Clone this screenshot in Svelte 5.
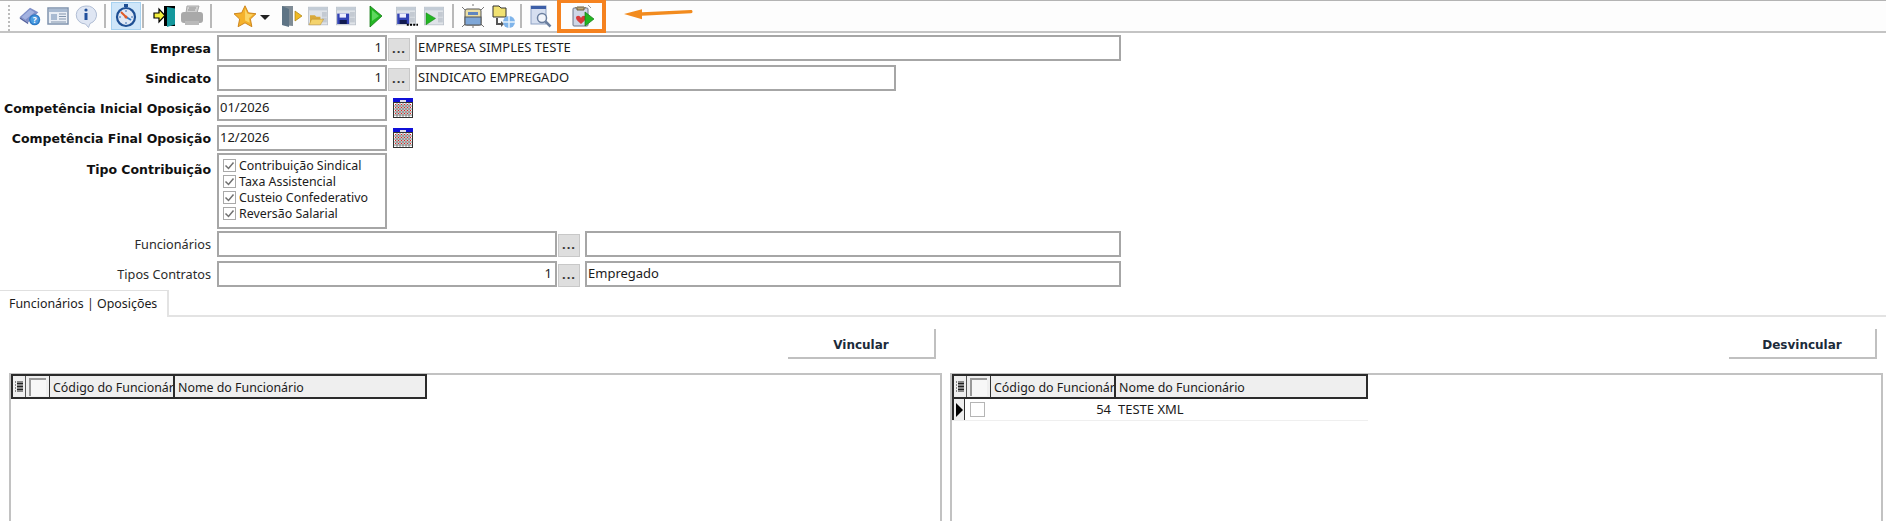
<script>
  const rowsTop = [
    { label: 'Empresa', code: '1', name: 'EMPRESA SIMPLES TESTE', wide: true },
    { label: 'Sindicato', code: '1', name: 'SINDICATO EMPREGADO', wide: false }
  ];
  const dates = [
    { label: 'Competência Inicial Oposição', value: '01/2026' },
    { label: 'Competência Final Oposição', value: '12/2026' }
  ];
  const tipos = ['Contribuição Sindical', 'Taxa Assistencial', 'Custeio Confederativo', 'Reversão Salarial'];
  const lower = [
    { label: 'Funcionários', code: '', name: '' },
    { label: 'Tipos Contratos', code: '1', name: 'Empregado' }
  ];
</script>

{#snippet cal()}
  <svg class="cal" viewBox="0 0 20 20" aria-hidden="true">
    <rect x="0" y="0" width="20" height="20" fill="#333"/>
    <rect x="0" y="0" width="20" height="4" fill="#1010d8"/>
    <rect x="7" y="2" width="6" height="2" fill="#dde"/>
    <rect x="1" y="5" width="18" height="14" fill="#fff"/>
    <path d="M1 8h18M1 11h18M1 14h18M1 17h18M4 5v14M7 5v14M10 5v14M13 5v14M16 5v14" stroke="#666" stroke-width=".8"/>
    <path d="M2 6.500h16M2 9.500h16M2 12.500h16M2 15.500h16" stroke="#e02020" stroke-width="1" stroke-dasharray="1 2"/>
  </svg>
{/snippet}

{#snippet panelBase()}
  <rect x="2" y="2" width="24" height="22" fill="#dfe3e8" stroke="#b8bfc8"/>
  <rect x="2" y="2" width="24" height="4" fill="#c3ccd6"/>
  <rect x="19" y="8" width="6" height="6" fill="#c4cad2"/>
  <rect x="19" y="15" width="6" height="6" fill="#c4cad2"/>
{/snippet}

{#snippet gridHead()}
  <div class="ghead">
    <div class="gind">
      <svg viewBox="0 0 10 14" width="10" height="14" aria-hidden="true"><path d="M1 2h1M1 5h1M1 8h1M1 11h1M3 2h6M3 5h6M3 8h6M3 11h6M3 3.500h6M3 6.500h6M3 9.500h6" stroke="#222" stroke-width="1"/></svg>
    </div>
    <div class="gchk"><span class="bigbox"></span></div>
    <div class="gcode">Código do Funcionário</div>
    <div class="gname">Nome do Funcionário</div>
  </div>
{/snippet}

<div class="page">
  <header class="toolbar">
    <span class="grip"></span>

    <span class="ico"><svg viewBox="-1 -1 30 28"><path d="M3 14 14 4l9 5-11 11z" fill="#7f8fc8"/><path d="M3 14l9 6 0 2-9-6z" fill="#56649f"/><path d="M5 14 14 6l5 3-10 8z" fill="#a3b2e0"/><circle cx="19" cy="17" r="6" fill="#2b78c4"/><circle cx="19" cy="17" r="4.500" fill="#4b9be0"/><text x="19" y="20.500" class="q">?</text></svg></span>
    <span class="ico"><svg viewBox="0 0 28 26"><rect x="4" y="5" width="20" height="16" fill="#e9eef5" stroke="#7f93ad" stroke-width="1.500"/><rect x="5" y="6" width="18" height="3" fill="#a9bbd2"/><rect x="7" y="11" width="6" height="6" fill="#a9bbd2"/><path d="M15 11h7M15 13.500h7M15 16h7M7 19h15" stroke="#8295ad"/></svg></span>
    <span class="ico"><svg viewBox="0 0 28 26"><path d="M14 3a9.500 9 0 0 1 4 17.500l-1.500 4-3-3.500A9.500 9 0 0 1 14 3z" fill="#dfe6f3" stroke="#b0bdd4"/><circle cx="14" cy="7" r="1.600" fill="#1f4f9c"/><path d="M14 10v7" stroke="#1f4f9c" stroke-width="3"/></svg></span>
    <span class="sep s1"></span>
    <span class="ico active"><svg viewBox="0 0 28 26"><rect x="12" y="1" width="4" height="3" fill="#1e4f94"/><circle cx="14" cy="14" r="9" fill="#dfe8f5" stroke="#1e4f94" stroke-width="2.200"/><path d="M14 14 9 9" stroke="#e05a28" stroke-width="2"/><path d="M14 14l5 3" stroke="#2f7ac8" stroke-width="2"/><circle cx="14" cy="14" r="1.500" fill="#e05a28"/><path d="M7 14h2M19 14h2M14 7v2M14 19v2" stroke="#3a6fb0"/></svg></span>
    <span class="sep s2"></span>
    <span class="ico"><svg viewBox="0 0 28 26"><path d="M14 3h11v20H14z" fill="#000"/><path d="M17 4l8 1.500v16L17 24z" fill="#14979c"/><path d="M4 10h5V6l6 6.500-6 6.500v-4H4z" fill="#f3ef3c" stroke="#000" stroke-width="1.200"/></svg></span>
    <span class="ico"><svg viewBox="0 0 28 26"><path d="M9 3h12l-2 7H8z" fill="#d0d0d0" stroke="#a8a8a8"/><rect x="3" y="9" width="22" height="11" rx="3" fill="#a9a9a9"/><rect x="7" y="18" width="14" height="4" fill="#b9b9b9"/><path d="M11 5h7M10 7h7" stroke="#909090"/></svg></span>
    <span class="sep s3"></span>
    <span class="ico"><svg viewBox="-1 -1 30 28"><path d="M14 2l3.600 7.600 8.200 1-6 5.700 1.600 8.200L14 20.400 6.600 24.500l1.600-8.200-6-5.700 8.200-1z" fill="#f5b22c" stroke="#c98016"/><path d="M14 5l2.600 5.600 6 .8-4.500 4 1 5-5-2.600z" fill="#fbd566"/></svg></span>
    <span class="caret"></span>
    <span class="ico"><svg viewBox="0 0 28 26"><path d="M6 3h11v20l-11-1z" fill="#7f8c96"/><path d="M6 3l7 3v18l-7-2z" fill="#5e7485"/><path d="M19 8l7 5-7 5z" fill="#f0b923" stroke="#a87f12" stroke-width=".7"/></svg></span>
    <span class="ico"><svg viewBox="-3.500 -3.250 35 32.500">{@render panelBase()}<path d="M4 12h6l2 2h5v9H4z" fill="#d9a93a"/><path d="M6 17h15l-4 7H3z" fill="#f4d36c" stroke="#b88a26" stroke-width=".6"/></svg></span>
    <span class="ico"><svg viewBox="-3.500 -3.250 35 32.500">{@render panelBase()}<rect x="3" y="10" width="15" height="13" fill="#3343b5"/><rect x="6" y="10" width="8" height="5" fill="#eef"/><rect x="6" y="18" width="9" height="5" fill="#101a50"/></svg></span>
    <span class="ico spaced"><svg viewBox="0 0 28 26"><path d="M8 3l12 10-12 11z" fill="#23b623" stroke="#157a15" stroke-width=".8"/><path d="M10 7l7 6-7 5z" fill="#5fd85f"/></svg></span>
    <span class="ico spaced"><svg viewBox="-3.500 -3.250 35 32.500">{@render panelBase()}<rect x="3" y="10" width="15" height="13" fill="#3343b5"/><rect x="6" y="10" width="8" height="5" fill="#eef"/><rect x="6" y="18" width="9" height="5" fill="#101a50"/><path d="M15 24h14" stroke="#000" stroke-width="2.500" stroke-dasharray="2.500 1.500"/></svg></span>
    <span class="ico"><svg viewBox="-3.500 -3.250 35 32.500">{@render panelBase()}<path d="M4 9l12 7-12 8z" fill="#23b623" stroke="#157a15" stroke-width=".6"/></svg></span>
    <span class="sep s4"></span>
    <span class="ico"><svg viewBox="0 0 28 26"><path d="M3 4l3 3M25 4l-3 3M3 24l3-3M25 24l-3-3M14 1v2M14 23v2" stroke="#777"/><rect x="6" y="6" width="16" height="16" rx="2" fill="#eadfa6" stroke="#555"/><rect x="6" y="14" width="16" height="8" fill="#7ea7d8" stroke="#555"/><rect x="9" y="9" width="10" height="3" fill="#5f86c0"/></svg></span>
    <span class="ico spaced"><svg viewBox="0 0 28 26"><path d="M4 3h6l2 2h5v9H4z" fill="#f1e171" stroke="#333"/><path d="M8 15v6h6" fill="none" stroke="#555" stroke-width="2"/><path d="M12 18l3 3-3 3z" fill="#555"/><circle cx="20" cy="19" r="6" fill="#7fb4ea"/><path d="M20 13v12M14 19h12" stroke="#e8f2fc" stroke-width="1.500"/></svg></span>
    <span class="sep s5"></span>
    <span class="ico"><svg viewBox="0 0 28 26"><rect x="5" y="3" width="15" height="18" fill="#d6dff0" stroke="#8ea2c4"/><rect x="5" y="3" width="15" height="3" fill="#3d5fa8"/><circle cx="16" cy="15" r="4.500" fill="#f2f5fb" stroke="#6b7f9f" stroke-width="1.500"/><path d="M19.500 18.500l5 5" stroke="#6b7f9f" stroke-width="2.500"/></svg></span>
    <span class="ico boxed"><svg viewBox="0 0 28 26"><rect x="5" y="5" width="15" height="18" rx="1" fill="#cfd6e6" stroke="#6b7488"/><path d="M9 4h7v3H9z" fill="#b9a87d" stroke="#6b5c3c"/><path d="M7 4h11v1H7z" fill="#8c8368"/><path d="M20 2l3 3" stroke="#999"/><path d="M8 15c0-3 4-3 5 0 1-3 5-3 5 0 0 2-3 4-5 6-2-2-5-4-5-6z" fill="#d83a3a"/><path d="M17 9l9 7-9 7z" fill="#23b623" stroke="#157a15" stroke-width=".7"/></svg></span>
  </header>

  <svg class="arrow" viewBox="0 0 69 12" aria-hidden="true"><path d="M0 6 18 1.300v3L67 2c1 0 1.500 .6 1.500 1.600S68 5.200 67 5.300L18 7.700v3.600z" fill="#f28b1e"/></svg>

  <section class="form">
    {#each rowsTop as r}
      <div class="row">
        <span class="label bold">{r.label}</span>
        <div class="input code">{r.code}</div>
        <button class="dots">...</button>
        <div class="input name" class:short={!r.wide}>{r.name}</div>
      </div>
    {/each}

    {#each dates as d}
      <div class="row">
        <span class="label bold">{d.label}</span>
        <div class="input date">{d.value}</div>
        {@render cal()}
      </div>
    {/each}

    <div class="row chkrow">
      <span class="label bold">Tipo Contribuição</span>
      <div class="checks">
        {#each tipos as t}
          <div class="chk">
            <svg viewBox="0 0 13 13" width="13" height="13" aria-hidden="true"><rect x=".5" y=".5" width="12" height="12" fill="#fff" stroke="#a9a9a9"/><path d="M2.500 6.500l3 3 5-6" fill="none" stroke="#707070" stroke-width="1.500"/></svg>
            <span>{t}</span>
          </div>
        {/each}
      </div>
    </div>

    {#each lower as l}
      <div class="row">
        <span class="label plain">{l.label}</span>
        <div class="input code long">{l.code}</div>
        <button class="dots">...</button>
        <div class="input name lname">{l.name}</div>
      </div>
    {/each}
  </section>

  <nav class="tabs"><div class="tab">Funcionários | Oposições</div></nav>

  <section class="work">
    <div class="pane">
      <div class="actions"><button class="action">Vincular</button></div>
      <div class="grid">{@render gridHead()}</div>
    </div>
    <div class="pane">
      <div class="actions"><button class="action">Desvincular</button></div>
      <div class="grid">
        {@render gridHead()}
        <div class="grow">
          <div class="gind arrowcell"><span class="tri"></span></div>
          <div class="gchk"><span class="smallbox"></span></div>
          <div class="gcode num">54</div>
          <div class="gname">TESTE XML</div>
        </div>
      </div>
    </div>
  </section>
</div>

<style>
  :global(body) { margin: 0; background: #fff; overflow: hidden; }
  .page {
    position: relative;
    width: 1886px;
    height: 521px;
    overflow: hidden;
    font-family: "Noto Sans", "DejaVu Sans", sans-serif;
    font-size: 12.4px;
    color: #1b1b1b;
    background: #fff;
  }

  .toolbar {
    display: flex;
    align-items: center;
    height: 30px;
    padding-left: 16px;
    border-top: 1px solid #b4b4b4;
    border-bottom: 2px solid #c4c4c4;
    position: relative;
    background: #fdfdfd;
  }
  .grip {
    position: absolute;
    left: 8px;
    top: 4px;
    width: 2px;
    height: 26px;
    background: repeating-linear-gradient(#bbb 0 2px, transparent 2px 4px);
  }
  .ico {
    display: flex;
    width: 28px;
    height: 26px;
    flex: none;
  }
  .ico.spaced { margin-left: 2px; }
  .ico svg { width: 28px; height: 26px; }
  .ico.active {
    background: #cfe6f9;
    outline: 1px solid #a8d2f0;
  }
  .ico.boxed {
    box-sizing: border-box;
    width: 49px;
    height: 34px;
    margin-left: 3px;
    align-items: center;
    justify-content: center;
    border: 4px solid #f5821f;
  }
  .sep { width: 2px; height: 24px; background: #b9b9b9; flex: none; }
  .s1 { margin: 0 6px 0 4px; }
  .s2 { margin: 0 6px 0 2px; }
  .s3 { margin: 0 19px 0 4px; }
  .s4 { margin: 0 5px 0 4px; }
  .s5 { margin: 0 4px 0 3px; }
  .caret {
    width: 0;
    height: 0;
    margin: 2px 6px 0 1px;
    border-left: 5px solid transparent;
    border-right: 5px solid transparent;
    border-top: 5px solid #222;
    flex: none;
  }
  .arrow {
    position: absolute;
    left: 624px;
    top: 8px;
    width: 69px;
    height: 12px;
  }

  .form {
    display: flex;
    flex-direction: column;
    gap: 4px;
    padding-top: 2px;
  }
  .row {
    display: flex;
    align-items: center;
    height: 26px;
  }
  .label {
    width: 211px;
    margin-right: 6px;
    text-align: right;
    flex: none;
    color: #2b2b2b;
    white-space: nowrap;
  }
  .plain { font-size: 12.700px; }
  .bold {
    font-family: "DejaVu Sans", sans-serif;
    font-size: 12.500px;
    font-weight: 700;
    color: #111;
    padding-top: 1px;
  }
  .input {
    box-sizing: border-box;
    height: 26px;
    border: 2px solid #a6a6a6;
    padding: 0 3px 0 1px;
    font-size: 13px;
    line-height: 21px;
    flex: none;
    background: #fff;
  }
  .code { width: 170px; text-align: right; }
  .code.long { width: 340px; }
  .date { width: 170px; }
  .name { width: 706px; margin-left: 5px; }
  .name.short { width: 481px; }
  .name.lname { width: 536px; }
  .dots {
    box-sizing: border-box;
    width: 22px;
    height: 23px;
    margin: 2px 0 0 1px;
    padding: 0 0 2px;
    border: 1px solid #c8c8c8;
    background: #dedede;
    font: 700 13px "Noto Sans", sans-serif;
    letter-spacing: 1px;
    color: #333;
    flex: none;
  }
  .cal { width: 20px; height: 20px; margin-left: 6px; }

  .chkrow {
    height: 76px;
    align-items: flex-start;
    margin-top: -2px;
    margin-bottom: -2px;
  }
  .chkrow .label { padding-top: 9px; }
  .checks {
    box-sizing: border-box;
    width: 170px;
    height: 76px;
    border: 2px solid #a6a6a6;
    padding: 2px 0 0 4px;
  }
  .chk {
    display: flex;
    align-items: center;
    gap: 3px;
    height: 16px;
  }

  .tabs {
    height: 25px;
    margin-top: 3px;
    border-bottom: 2px solid #e3e3e3;
  }
  .tab {
    box-sizing: border-box;
    width: 169px;
    height: 27px;
    padding: 4px 0 0 9px;
    background: #fff;
    border-top: 1px solid #e0e0e0;
    border-right: 2px solid #e3e3e3;
  }

  .work {
    display: flex;
    gap: 8px;
    padding: 12px 3px 0 9px;
  }
  .pane { width: 933px; flex: none; }
  .actions {
    display: flex;
    justify-content: flex-end;
    height: 30px;
    padding-right: 6px;
    margin-bottom: 14px;
  }
  .action {
    width: 148px;
    height: 30px;
    padding: 3px 0 0;
    border: none;
    border-right: 2px solid #c0c0c0;
    border-bottom: 2px solid #c0c0c0;
    background: #fff;
    font: 700 12px "DejaVu Sans", sans-serif;
    color: #1c2b3a;
  }
  .grid {
    height: 160px;
    border: 2px solid #c2c2c2;
    border-bottom: none;
  }
  .ghead {
    box-sizing: border-box;
    display: flex;
    width: 416px;
    height: 25px;
    border: 2px solid #2b2b2b;
    background: #efefef;
    margin-top: -1px;
  }
  .gind {
    width: 13px;
    display: flex;
    align-items: center;
    justify-content: center;
    flex: none;
    border-right: 1px solid #555;
    box-sizing: border-box;
  }
  .gchk {
    width: 24px;
    display: flex;
    align-items: center;
    justify-content: center;
    flex: none;
    box-sizing: border-box;
    border-right: 1px solid #333;
  }
  .bigbox {
    width: 15px;
    height: 16px;
    border-top: 2px solid #999;
    border-left: 2px solid #999;
    background: #f7f7f7;
  }
  .gcode {
    box-sizing: border-box;
    width: 125px;
    padding-left: 3px;
    overflow: hidden;
    white-space: nowrap;
    line-height: 23px;
    border-right: 2px solid #2b2b2b;
    flex: none;
  }
  .gname { padding-left: 3px; line-height: 23px; white-space: nowrap; }
  .grow {
    display: flex;
    width: 416px;
    height: 22px;
    border-bottom: 1px solid #efefef;
    box-sizing: border-box;
    font-size: 13px;
  }
  .grow .gcode { border-right: none; text-align: right; padding-right: 3px; line-height: 21px; }
  .grow .gname { line-height: 21px; padding-left: 4px; }
  .grow .gchk { border-right: none; }
  .arrowcell { background: #efefef; border-right: 1px solid #333; border-left: 2px solid #2b2b2b; width: 13px; }
  .tri {
    width: 0;
    height: 0;
    border-top: 7px solid transparent;
    border-bottom: 7px solid transparent;
    border-left: 7px solid #000;
  }
  .smallbox {
    width: 13px;
    height: 13px;
    border: 1px solid #b5b5b5;
    background: #fff;
  }
  .q { font: 700 9px "Noto Sans", sans-serif; fill: #fff; text-anchor: middle; }
</style>
